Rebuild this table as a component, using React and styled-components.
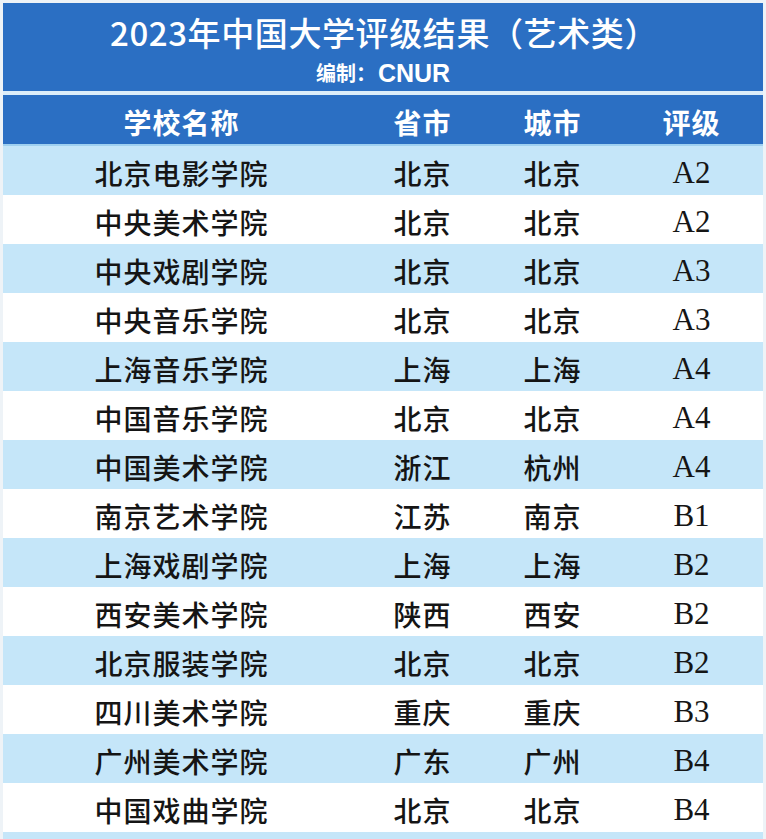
import React from "react";
import styled, { createGlobalStyle } from "styled-components";

const GlobalStyle = createGlobalStyle`
    html, body {
        margin: 0;
        padding: 0;
        background: #eef3f7;
    }
`

const Page = styled.div`
    width: 766px;
    height: 839px;
    padding: 3px 3px 0 3px;
    box-sizing: border-box;
    overflow: hidden;
    font-family: "Noto Sans CJK SC", "Liberation Sans", sans-serif;
`

const TitleBlock = styled.div`
    height: 92px;
    box-sizing: border-box;
    padding-top: 9px;
    background: #2b6fc3;
    color: white;
    display: flex;
    flex-direction: column;
    align-items: center;
    border-bottom: 4px solid #dcedf9;
`

const Title = styled.h1`
    margin: 0;
    font-size: 33px;
    font-weight: 500;
    line-height: 40px;
    letter-spacing: 0.6px;
    padding-left: 2px;
`

const Subtitle = styled.div`
    font-size: 20px;
    font-weight: 700;
    line-height: 24px;
    margin-top: 9px;
    display: flex;
    align-items: center;
    gap: 2px;

    span {
        font-family: "Liberation Sans", sans-serif;
        font-size: 25px;
    }
`

const Row = styled.div`
    display: grid;
    grid-template-columns: 357px 125px 135px 143px;
    height: ${props => props.height || 49}px;
    align-items: center;
    background: ${props => props.bg || 'white'};
    color: ${props => props.color || '#151515'};
`

const Cell = styled.div`
    text-align: center;
    font-size: 28px;
    font-weight: ${props => props.weight || 500};
    letter-spacing: 1px;
    line-height: 1;
    padding-top: ${props => props.offset || 4}px;
    ${props => props.serif && `
        font-family: "Liberation Serif", serif;
        font-weight: 400;
        font-size: 31px;
        letter-spacing: 0;
    `}
`

const HeaderRow = styled(Row)`
    border-bottom: 2px solid #9fd0f0;
`

const rows = [
    ["北京电影学院", "北京", "北京", "A2"],
    ["中央美术学院", "北京", "北京", "A2"],
    ["中央戏剧学院", "北京", "北京", "A3"],
    ["中央音乐学院", "北京", "北京", "A3"],
    ["上海音乐学院", "上海", "上海", "A4"],
    ["中国音乐学院", "北京", "北京", "A4"],
    ["中国美术学院", "浙江", "杭州", "A4"],
    ["南京艺术学院", "江苏", "南京", "B1"],
    ["上海戏剧学院", "上海", "上海", "B2"],
    ["西安美术学院", "陕西", "西安", "B2"],
    ["北京服装学院", "北京", "北京", "B2"],
    ["四川美术学院", "重庆", "重庆", "B3"],
    ["广州美术学院", "广东", "广州", "B4"],
    ["中国戏曲学院", "北京", "北京", "B4"],
]

function App() {
    return (
        <Page>
            <GlobalStyle />
            <TitleBlock>
                <Title>2023年中国大学评级结果（艺术类）</Title>
                <Subtitle>编制：<span>CNUR</span></Subtitle>
            </TitleBlock>
            <HeaderRow height={49} bg="#2b6fc3" color="white">
                <Cell weight={700} offset={0}>学校名称</Cell>
                <Cell weight={700} offset={0}>省市</Cell>
                <Cell weight={700} offset={0}>城市</Cell>
                <Cell weight={700} offset={0}>评级</Cell>
            </HeaderRow>
            {rows.map((r, i) => (
                <Row key={i} bg={i % 2 === 0 ? '#c5e6f9' : '#ffffff'}>
                    <Cell>{r[0]}</Cell>
                    <Cell>{r[1]}</Cell>
                    <Cell>{r[2]}</Cell>
                    <Cell serif>{r[3]}</Cell>
                </Row>
            ))}
            <Row height={10} bg="#c5e6f9" />
        </Page>
    )
}

export default App;
